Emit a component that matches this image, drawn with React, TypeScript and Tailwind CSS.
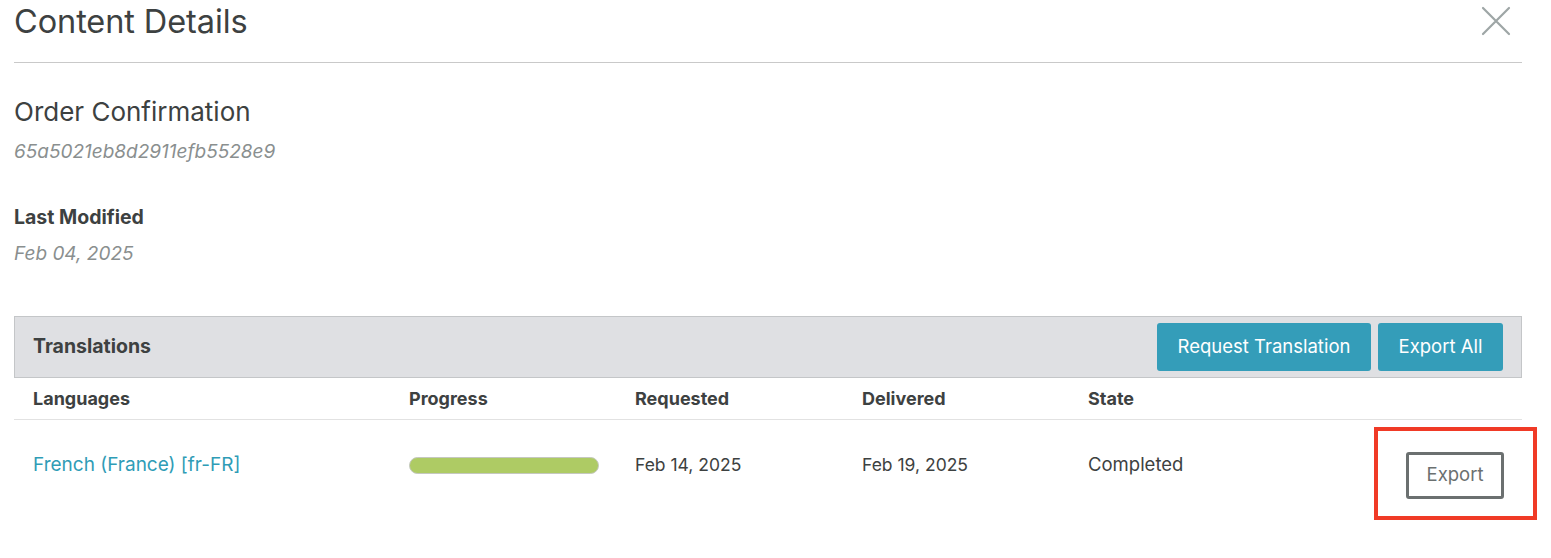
import React from "react";

export default function App() {
  const font = { fontFamily: "Inter, 'Noto Sans', sans-serif" };
  return (
    <div className="w-[1551px] h-[558px] bg-white relative overflow-hidden text-[#3d4141]" style={font}>
      <div className="pl-[14px] pr-[29px]">
        <div className="flex items-start justify-between h-[63px] border-b border-[#c9c9c9]">
          <h1 className="text-[32.5px] leading-[44px] font-normal tracking-[-0.1px]">Content Details</h1>
          <svg width="30" height="30" viewBox="0 0 30 30" className="mt-[6px] mr-[11px]">
            <path d="M2 2 L28 28 M28 2 L2 28" stroke="#9ea6a6" strokeWidth="2.2" strokeLinecap="round" />
          </svg>
        </div>
        <div className="pt-[31px]">
          <div className="text-[26px] leading-[36px]">Order Confirmation</div>
          <div className="text-[19px] leading-[28px] italic text-[#8a8f8f] mt-[8px]">65a5021eb8d2911efb5528e9</div>
          <div className="text-[19.5px] leading-[28px] font-bold mt-[37px]">Last Modified</div>
          <div className="text-[19px] leading-[28px] italic text-[#8a8f8f] mt-[9px]">Feb 04, 2025</div>
        </div>
        <div className="mt-[48px]">
          <div className="h-[62px] bg-[#dfe0e3] border border-[#c4c6c8] flex items-center justify-between pl-[18px] pr-[18px]">
            <span className="text-[19.5px] font-bold">Translations</span>
            <div className="flex gap-[7px]">
              <button className="h-[48px] w-[214px] rounded-[3px] bg-[#349db9] text-white text-[18.5px]">Request Translation</button>
              <button className="h-[48px] w-[125px] rounded-[3px] bg-[#349db9] text-white text-[18.5px]">Export All</button>
            </div>
          </div>
          <div className="grid grid-cols-[376px_226px_227px_226px_1fr] h-[42px] items-center border-b border-[#e2e2e2] text-[18px] font-bold">
            <div className="pl-[19px]">Languages</div>
            <div className="pl-[19px]">Progress</div>
            <div className="pl-[19px]">Requested</div>
            <div className="pl-[19px]">Delivered</div>
            <div className="pl-[19px]">State</div>
          </div>
          <div className="grid grid-cols-[376px_226px_227px_226px_1fr] h-[90px] items-center text-[18px]">
            <div className="pl-[19px] text-[#2f9cb6] text-[19px]">French (France) [fr-FR]</div>
            <div className="pl-[19px]">
              <div className="w-[190px] h-[17px] rounded-full bg-[#aecb64] border border-[#c5c8c0]"></div>
            </div>
            <div className="pl-[19px] text-[17.5px]">Feb 14, 2025</div>
            <div className="pl-[19px] text-[17.5px]">Feb 19, 2025</div>
            <div className="pl-[19px] flex items-center justify-between">
              <span className="text-[18.5px]">Completed</span>
              <button className="mr-[18px] mt-[20px] w-[98px] h-[47px] border-[3px] border-[#6b7070] rounded-[3px] text-[#6b7070] text-[18.5px]">Export</button>
            </div>
          </div>
        </div>
      </div>
      <div className="absolute left-[1374px] top-[427px] w-[163px] h-[93px] border-[4px] border-[#f03a26]"></div>
    </div>
  );
}
